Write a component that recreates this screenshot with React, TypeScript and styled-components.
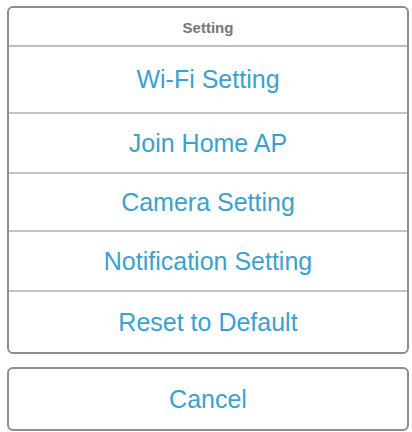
import React from "react";
import styled, {createGlobalStyle} from "styled-components";

const GlobalStyle = createGlobalStyle`
  * {
    box-sizing: border-box;
  }
  body {
    margin: 0;
    background: #ffffff;
    font-family: "Liberation Sans", Arial, sans-serif;
  }
`;

const Sheet = styled.div`
  display: flex;
  flex-direction: column;
  padding: 6px 3px 0 7px;
`;

const Group = styled.div`
  display: flex;
  flex-direction: column;
  border: 2px solid #8e8e8e;
  border-radius: 6px;
  background: #fff;
  overflow: hidden;
`;

const Title = styled.div`
  height: 39px;
  display: flex;
  align-items: center;
  justify-content: center;
  border-bottom: 2px solid #bdbdbd;
  color: #777;
  font-size: 15px;
  font-weight: bold;
  padding-top: 1px;
`;

const Option = styled.button<{$h: number; $last?: boolean}>`
  height: ${(p) => p.$h}px;
  display: flex;
  align-items: center;
  justify-content: center;
  border: none;
  border-bottom: ${(p) => (p.$last ? "none" : "2px solid #c4c4c4")};
  background: transparent;
  color: #3ba1cf;
  font-family: inherit;
  font-size: 25px;
  padding: 0;
  cursor: pointer;
`;

const CancelGroup = styled(Group)`
  margin-top: 13px;
`;

const options = [
  {label: "Wi-Fi Setting", h: 67},
  {label: "Join Home AP", h: 60},
  {label: "Camera Setting", h: 58},
  {label: "Notification Setting", h: 60},
  {label: "Reset to Default", h: 60},
];

const App: React.FC = () => {
  return (
    <>
      <GlobalStyle />
      <Sheet>
        <Group>
          <Title>Setting</Title>
          {options.map((o, i) => (
            <Option key={o.label} $h={o.h} $last={i === options.length - 1}>
              {o.label}
            </Option>
          ))}
        </Group>
        <CancelGroup>
          <Option $h={60} $last>
            Cancel
          </Option>
        </CancelGroup>
      </Sheet>
    </>
  );
};

export default App;
